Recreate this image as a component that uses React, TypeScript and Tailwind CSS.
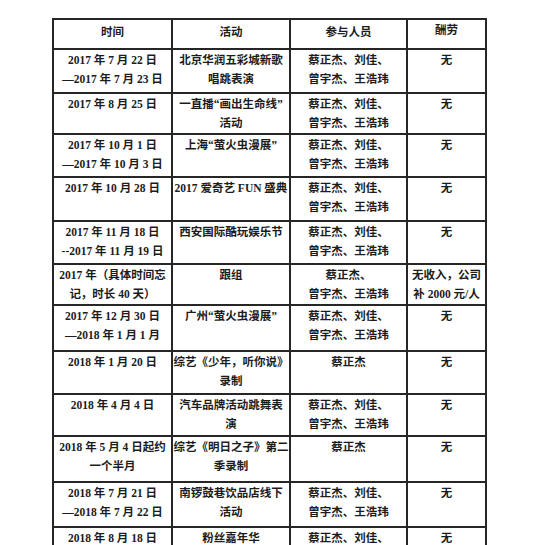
import React from "react";

type Row = { h: number; t: string[]; a: string[]; p: string[]; r: string[] };

const NAMES = ["蔡正杰、刘佳、", "曾宇杰、王浩玮"];

const rows: Row[] = [
  { h: 44, t: ["2017 年 7 月 22 日", "—2017 年 7 月 23 日"], a: ["北京华润五彩城新歌", "唱跳表演"], p: NAMES, r: ["无"] },
  { h: 41, t: ["2017 年 8 月 25 日"], a: ["一直播“画出生命线”", "活动"], p: NAMES, r: ["无"] },
  { h: 43, t: ["2017 年 10 月 1 日", "—2017 年 10 月 3 日"], a: ["上海“萤火虫漫展”"], p: NAMES, r: ["无"] },
  { h: 44, t: ["2017 年 10 月 28 日"], a: ["2017 爱奇艺 FUN 盛典"], p: NAMES, r: ["无"] },
  { h: 43, t: ["2017 年 11 月 18 日", "--2017 年 11 月 19 日"], a: ["西安国际酷玩娱乐节"], p: NAMES, r: ["无"] },
  { h: 41, t: ["2017 年（具体时间忘", "记，时长 40 天）"], a: ["跟组"], p: ["蔡正杰、", "曾宇杰、王浩玮"], r: ["无收入，公司", "补 2000 元/人"] },
  { h: 46, t: ["2017 年 12 月 30 日", "—2018 年 1 月 1 月"], a: ["广州“萤火虫漫展”"], p: NAMES, r: ["无"] },
  { h: 43, t: ["2018 年 1 月 20 日"], a: ["综艺《少年，听你说》", "录制"], p: ["蔡正杰"], r: ["无"] },
  { h: 42, t: ["2018 年 4 月 4 日"], a: ["汽车品牌活动跳舞表", "演"], p: NAMES, r: ["无"] },
  { h: 46, t: ["2018 年 5 月 4 日起约", "一个半月"], a: ["综艺《明日之子》第二", "季录制"], p: ["蔡正杰"], r: ["无"] },
  { h: 45, t: ["2018 年 7 月 21 日", "—2018 年 7 月 22 日"], a: ["南锣鼓巷饮品店线下", "活动"], p: NAMES, r: ["无"] },
  { h: 45, t: ["2018 年 8 月 18 日"], a: ["粉丝嘉年华"], p: NAMES, r: ["无"] },
];

function Cell({ lines, extra = "" }: { lines: string[]; extra?: string }) {
  return (
    <td className={`border-2 border-[#262626] align-top text-center pt-[1px] px-0 ${extra}`}>
      {lines.map((l, i) => (
        <div key={i} className="whitespace-nowrap">
          {l}
        </div>
      ))}
    </td>
  );
}

export default function App() {
  return (
    <div
      className="w-[554px] h-[545px] overflow-hidden bg-white pt-[18px] pl-[52px] text-[#1c1c1c] font-bold text-[11.5px] leading-[19px]"
      style={{ fontFamily: '"Liberation Serif", "Noto Sans CJK SC", serif' }}
    >
      <table className="border-collapse table-fixed w-[433px]">
        <colgroup>
          <col className="w-[119px]" />
          <col className="w-[118px]" />
          <col className="w-[117px]" />
          <col className="w-[79px]" />
        </colgroup>
        <tbody>
          <tr className="h-[30px]">
            <td className="border-2 border-[#262626] text-center align-top pt-[3px]">时间</td>
            <td className="border-2 border-[#262626] text-center align-top pt-[3px]">活动</td>
            <td className="border-2 border-[#262626] text-center align-top pt-[3px]">参与人员</td>
            <td className="border-2 border-[#262626] text-center align-top pt-[1px]">酬劳</td>
          </tr>
          {rows.map((r, i) => (
            <tr key={i} style={{ height: r.h }}>
              <Cell lines={r.t} />
              <Cell lines={r.a} />
              <Cell lines={r.p} />
              <Cell lines={r.r} />
            </tr>
          ))}
        </tbody>
      </table>
    </div>
  );
}
